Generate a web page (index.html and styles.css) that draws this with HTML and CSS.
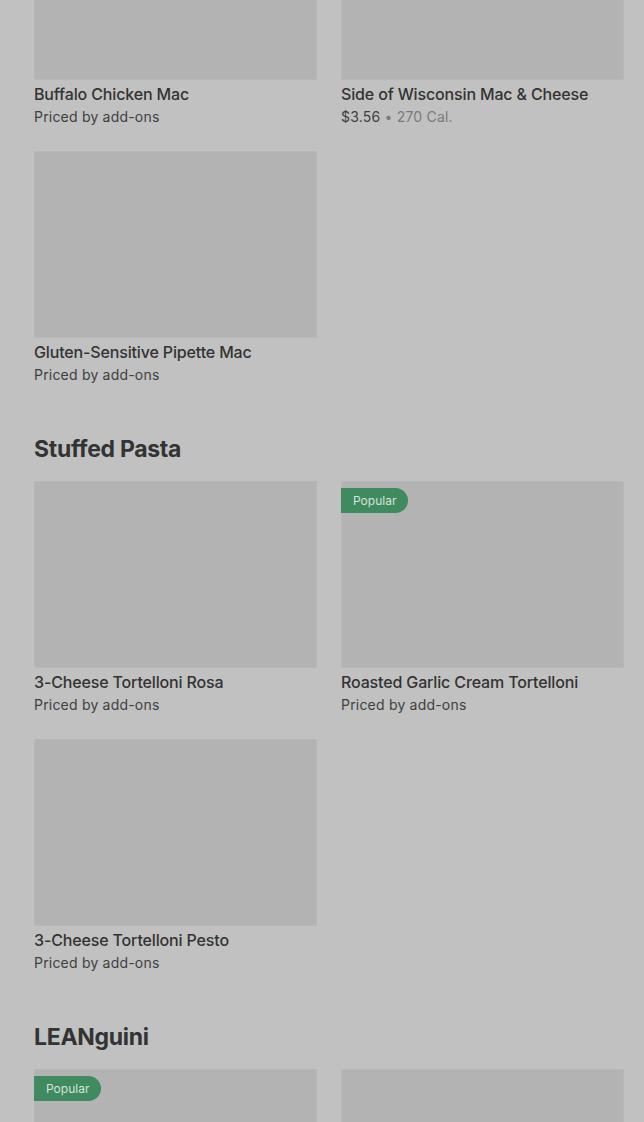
FILE: index.html
```html
<!DOCTYPE html>
<html lang="en">
<head>
<meta charset="utf-8">
<title>Menu</title>
<link rel="stylesheet" href="styles.css">
</head>
<body>
<main class="menu">
  <section class="section section-first">
    <div class="grid">
      <div class="card">
        <div class="img"></div>
        <div class="title">Buffalo Chicken Mac</div>
        <div class="sub">Priced by add-ons</div>
      </div>
      <div class="card">
        <div class="img"></div>
        <div class="title">Side of Wisconsin Mac &amp; Cheese</div>
        <div class="sub">$3.56 <span class="muted">• 270 Cal.</span></div>
      </div>
      <div class="card">
        <div class="img"></div>
        <div class="title">Gluten-Sensitive Pipette Mac</div>
        <div class="sub">Priced by add-ons</div>
      </div>
    </div>
  </section>

  <section class="section">
    <h2 class="heading">Stuffed Pasta</h2>
    <div class="grid">
      <div class="card">
        <div class="img"></div>
        <div class="title">3-Cheese Tortelloni Rosa</div>
        <div class="sub">Priced by add-ons</div>
      </div>
      <div class="card">
        <div class="img"><span class="badge">Popular</span></div>
        <div class="title">Roasted Garlic Cream Tortelloni</div>
        <div class="sub">Priced by add-ons</div>
      </div>
      <div class="card">
        <div class="img"></div>
        <div class="title">3-Cheese Tortelloni Pesto</div>
        <div class="sub">Priced by add-ons</div>
      </div>
    </div>
  </section>

  <section class="section">
    <h2 class="heading">LEANguini</h2>
    <div class="grid">
      <div class="card">
        <div class="img"><span class="badge">Popular</span></div>
      </div>
      <div class="card">
        <div class="img"></div>
      </div>
    </div>
  </section>
</main>
</body>
</html>
```

FILE: styles.css
```css
html, body {
  margin: 0;
  padding: 0;
  background: #c1c1c1;
  overflow: hidden;
}
body {
  font-family: Inter, "Noto Sans", sans-serif;
  color: #333333;
}
.menu {
  padding: 0 20px 0 34px;
}
.section-first {
  margin-top: -107px;
}
.grid {
  display: grid;
  grid-template-columns: 283px 283px;
  column-gap: 24px;
  row-gap: 23px;
}
.card {
  display: flex;
  flex-direction: column;
}
.img {
  position: relative;
  height: 187px;
  background: #b3b3b3;
  box-shadow: inset 0 0 0 1px #b8b8b8;
}
.title {
  margin-top: 3px;
  font-size: 16px;
  line-height: 22px;
  font-weight: 500;
  letter-spacing: -0.15px;
  color: #333333;
}
.sub {
  margin-top: 1px;
  font-size: 14px;
  line-height: 22px;
  letter-spacing: 0.2px;
  color: #3f3f3f;
}
.muted {
  color: #7a7a7a;
}
.heading {
  margin: 47px 0 16px;
  font-size: 23px;
  line-height: 32px;
  font-weight: 700;
  letter-spacing: -0.3px;
  color: #333333;
}
.badge {
  position: absolute;
  left: 0;
  top: 7px;
  height: 25px;
  line-height: 25px;
  padding: 0 12px;
  background: #3f8a5e;
  color: #d6e4da;
  font-size: 12px;
  border-radius: 0 13px 13px 0;
}
```
